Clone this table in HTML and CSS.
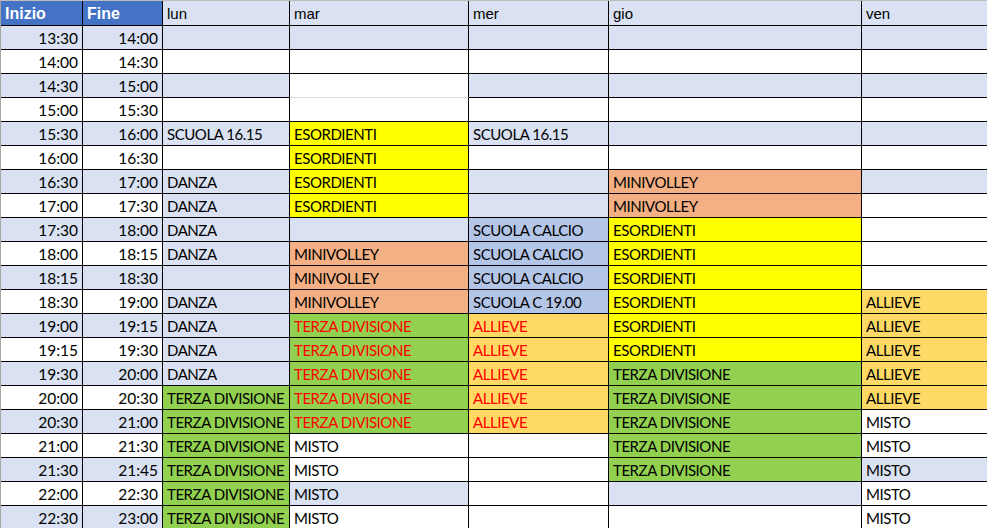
FILE: index.html
```html
<!DOCTYPE html>
<html lang="it">
<head>
  <meta charset="UTF-8">
  <title>Orari palestra</title>
  <link rel="stylesheet" href="styles.css">
</head>
<body>
  <div class="sheet">
    <table class="orari">
      <colgroup>
        <col class="c-ora">
        <col class="c-fine">
        <col class="c-lun">
        <col class="c-mar">
        <col class="c-mer">
        <col class="c-gio">
        <col class="c-ven">
      </colgroup>
      <thead>
        <tr>
          <th class="hd-ora">Inizio</th>
          <th class="hd-ora">Fine</th>
          <th>lun</th>
          <th>mar</th>
          <th>mer</th>
          <th>gio</th>
          <th>ven</th>
        </tr>
      </thead>
      <tbody>
        <tr class="s">
          <td class="t">13:30</td><td class="t">14:00</td>
          <td></td><td></td><td></td><td></td><td></td>
        </tr>
        <tr>
          <td class="t">14:00</td><td class="t">14:30</td>
          <td></td><td></td><td></td><td></td><td></td>
        </tr>
        <tr class="s">
          <td class="t">14:30</td><td class="t">15:00</td>
          <td></td><td class="w soft"></td><td></td><td></td><td></td>
        </tr>
        <tr>
          <td class="t">15:00</td><td class="t">15:30</td>
          <td></td><td></td><td></td><td></td><td></td>
        </tr>
        <tr class="s">
          <td class="t">15:30</td><td class="t">16:00</td>
          <td>SCUOLA 16.15</td><td class="yel">ESORDIENTI</td><td>SCUOLA 16.15</td><td></td><td></td>
        </tr>
        <tr>
          <td class="t">16:00</td><td class="t">16:30</td>
          <td></td><td class="yel">ESORDIENTI</td><td></td><td></td><td></td>
        </tr>
        <tr class="s">
          <td class="t">16:30</td><td class="t">17:00</td>
          <td>DANZA</td><td class="yel">ESORDIENTI</td><td></td><td class="ora">MINIVOLLEY</td><td></td>
        </tr>
        <tr>
          <td class="t">17:00</td><td class="t">17:30</td>
          <td class="b">DANZA</td><td class="yel">ESORDIENTI</td><td class="b"></td><td class="ora">MINIVOLLEY</td><td></td>
        </tr>
        <tr class="s">
          <td class="t">17:30</td><td class="t">18:00</td>
          <td>DANZA</td><td></td><td class="cal">SCUOLA CALCIO</td><td class="yel">ESORDIENTI</td><td class="w"></td>
        </tr>
        <tr>
          <td class="t">18:00</td><td class="t">18:15</td>
          <td class="b">DANZA</td><td class="ora">MINIVOLLEY</td><td class="cal">SCUOLA CALCIO</td><td class="yel">ESORDIENTI</td><td></td>
        </tr>
        <tr class="s">
          <td class="t">18:15</td><td class="t">18:30</td>
          <td></td><td class="ora">MINIVOLLEY</td><td class="cal">SCUOLA CALCIO</td><td class="yel">ESORDIENTI</td><td class="w"></td>
        </tr>
        <tr>
          <td class="t">18:30</td><td class="t">19:00</td>
          <td class="b">DANZA</td><td class="ora">MINIVOLLEY</td><td class="cal">SCUOLA C 19.00</td><td class="yel">ESORDIENTI</td><td class="all">ALLIEVE</td>
        </tr>
        <tr class="s">
          <td class="t">19:00</td><td class="t">19:15</td>
          <td>DANZA</td><td class="grn red">TERZA DIVISIONE</td><td class="all red">ALLIEVE</td><td class="yel">ESORDIENTI</td><td class="all">ALLIEVE</td>
        </tr>
        <tr>
          <td class="t">19:15</td><td class="t">19:30</td>
          <td class="b">DANZA</td><td class="grn red">TERZA DIVISIONE</td><td class="all red">ALLIEVE</td><td class="yel">ESORDIENTI</td><td class="all">ALLIEVE</td>
        </tr>
        <tr class="s">
          <td class="t">19:30</td><td class="t">20:00</td>
          <td>DANZA</td><td class="grn red">TERZA DIVISIONE</td><td class="all red">ALLIEVE</td><td class="grn">TERZA DIVISIONE</td><td class="all">ALLIEVE</td>
        </tr>
        <tr>
          <td class="t">20:00</td><td class="t">20:30</td>
          <td class="grn">TERZA DIVISIONE</td><td class="grn red">TERZA DIVISIONE</td><td class="all red">ALLIEVE</td><td class="grn">TERZA DIVISIONE</td><td class="all">ALLIEVE</td>
        </tr>
        <tr class="s">
          <td class="t">20:30</td><td class="t">21:00</td>
          <td class="grn">TERZA DIVISIONE</td><td class="grn red">TERZA DIVISIONE</td><td class="all red">ALLIEVE</td><td class="grn">TERZA DIVISIONE</td><td class="w">MISTO</td>
        </tr>
        <tr>
          <td class="t">21:00</td><td class="t">21:30</td>
          <td class="grn">TERZA DIVISIONE</td><td>MISTO</td><td></td><td class="grn">TERZA DIVISIONE</td><td>MISTO</td>
        </tr>
        <tr class="s">
          <td class="t">21:30</td><td class="t">21:45</td>
          <td class="grn">TERZA DIVISIONE</td><td class="w">MISTO</td><td class="w"></td><td class="grn">TERZA DIVISIONE</td><td>MISTO</td>
        </tr>
        <tr>
          <td class="t">22:00</td><td class="t">22:30</td>
          <td class="grn">TERZA DIVISIONE</td><td class="b">MISTO</td><td></td><td class="b"></td><td>MISTO</td>
        </tr>
        <tr class="s">
          <td class="t">22:30</td><td class="t">23:00</td>
          <td class="grn">TERZA DIVISIONE</td><td class="w">MISTO</td><td class="w"></td><td class="w"></td><td class="w">MISTO</td>
        </tr>
      </tbody>
    </table>
  </div>
</body>
</html>
```

FILE: styles.css
```css
body { margin: 0; background: #fff; overflow: hidden; }
.sheet { border-top: 1px solid #bdbdbd; border-left: 1px solid #a6a6a6; }

.orari { border-collapse: separate; border-spacing: 0; table-layout: fixed; width: 1001px; }
.c-ora { width: 82px; }
.c-fine { width: 80px; }
.c-lun { width: 127px; }
.c-mar { width: 179px; }
.c-mer { width: 140px; }
.c-gio { width: 253px; }
.c-ven { width: 140px; }

.orari th, .orari td {
  border-right: 1px solid #000;
  border-bottom: 1px solid #000;
  padding: 0 4px;
  white-space: nowrap;
  overflow: hidden;
  text-align: left;
}
.orari thead tr { height: 25px; }
.orari tbody tr { height: 24px; }

.orari th {
  background: #d9e1f2;
  font-family: "Liberation Sans", Arial, sans-serif;
  font-weight: normal;
  font-size: 15px;
  line-height: 22px;
  padding-top: 2px;
  color: #000;
}
.orari th.hd-ora { background: #4472c4; color: #fff; font-weight: bold; font-size: 16px; }

.orari td {
  font-family: Lato, "Liberation Sans", sans-serif;
  font-size: 15px;
  letter-spacing: -0.45px;
  line-height: 22px;
  padding-top: 1px;
  color: #000;
}
.orari td.t { text-align: right; font-size: 15.5px; letter-spacing: 0; }

/* righe alternate */
.s td { background: #d9e1f2; }
td.w, .s td.w { background: #fff; }
td.b { background: #d9e1f2; }
td.soft { border-bottom-color: #d9d9d9; }

/* attivita */
td.yel, .s td.yel { background: #ffff00; }
td.ora, .s td.ora { background: #f4b084; }
td.grn, .s td.grn { background: #92d050; }
td.all, .s td.all { background: #ffd966; }
td.cal, .s td.cal { background: #b4c6e7; }
td.red { color: #ff0000; }
```
